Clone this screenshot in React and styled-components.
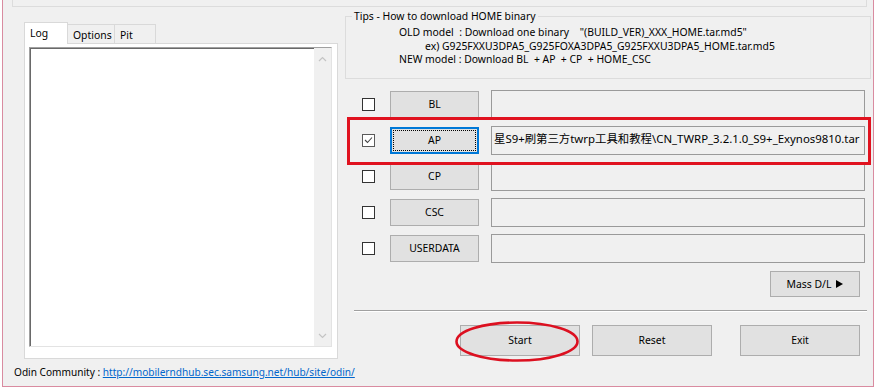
import styled, { createGlobalStyle } from 'styled-components';

const GlobalStyle = createGlobalStyle`
  html, body {
    margin: 0;
    padding: 0;
    background: #ffffff;
  }
  body {
    font-family: "Noto Sans", "Noto Sans CJK SC", sans-serif;
    font-size: 10.4px;
    color: #000;
  }
`;

const Frame = styled.div`
  position: relative;
  box-sizing: border-box;
  width: 872px;
  height: 387px;
  margin-left: 2px;
  background: #f0f0f0;
  border: 1px solid #d98ba0;
  border-top: none;
  display: flex;
  flex-direction: column;
`;

const TopGroup = styled.div`
  box-sizing: border-box;
  width: 855px;
  height: 7px;
  margin-left: 9px;
  border: 1px solid #dcdcdc;
  border-top: none;
`;

const Main = styled.div`
  display: flex;
  align-items: flex-start;
`;

const LeftCol = styled.div`
  width: 314px;
  margin: 15px 0 0 21px;
`;

const Tabs = styled.div`
  display: flex;
  align-items: flex-end;
  height: 21px;
  position: relative;
  z-index: 1;
`;

const Tab = styled.div`
  box-sizing: border-box;
  width: ${(p) => p.$w}px;
  height: ${(p) => (p.$active ? 22 : 19)}px;
  margin-bottom: ${(p) => (p.$active ? -1 : 0)}px;
  margin-left: ${(p) => (p.$first ? 0 : -1)}px;
  padding: ${(p) => (p.$active ? '3px 0 0 5px' : '3px 0 0 5px')};
  background: ${(p) => (p.$active ? '#ffffff' : '#f0f0f0')};
  border: 1px solid #d9d9d9;
  border-bottom: none;
  line-height: 14px;
`;

const TabPanel = styled.div`
  box-sizing: border-box;
  width: 314px;
  height: 316px;
  padding: 3px 0 0 4px;
  background: #ffffff;
  border: 1px solid #d9d9d9;
`;

const LogBox = styled.div`
  box-sizing: border-box;
  width: 303px;
  height: 300px;
  display: flex;
  justify-content: flex-end;
  background: #ffffff;
  border-top: 1px solid #a0a0a0;
  border-left: 1px solid #a0a0a0;
  border-right: 1px solid #e3e3e3;
  border-bottom: 1px solid #e3e3e3;
  box-shadow: inset 1px 1px 0 #696969;
`;

const ScrollTrack = styled.div`
  width: 17px;
  background: #f0f0f0;
  display: flex;
  flex-direction: column;
  justify-content: space-between;
  align-items: center;
  padding: 8px 0 7px;
`;

const RightCol = styled.div`
  width: 526px;
  margin: 2px 0 0 7px;
`;

const Tips = styled.fieldset`
  margin: 0;
  padding: 0;
  border: 1px solid #dcdcdc;
  min-width: 0;
`;

const TipsTitle = styled.legend`
  margin-left: 6px;
  padding: 0 2px;
  line-height: 14px;
`;

const TipsBody = styled.div`
  padding: 3px 0 11px 53px;
  line-height: 13.5px;
`;

const TipLine = styled.div`
  padding-left: ${(p) => (p.$indent ? 26 : 0)}px;
  white-space: pre;
`;

const Rows = styled.div`
  display: flex;
  flex-direction: column;
  gap: 7px;
  margin-top: 11px;
`;

const Row = styled.div`
  display: flex;
  align-items: center;
  height: 29px;
  padding-left: 17px;
`;

const Check = styled.div`
  box-sizing: border-box;
  width: 13px;
  height: 13px;
  margin-right: 15px;
  background: #ffffff;
  border: 1px solid ${(p) => (p.$checked ? '#5a5a5a' : '#333333')};
  display: flex;
  align-items: center;
  justify-content: center;
`;

const Button = styled.button`
  box-sizing: border-box;
  width: ${(p) => p.$w}px;
  height: ${(p) => p.$h}px;
  margin-left: ${(p) => p.$gap || 0}px;
  padding: 0;
  background: #e1e1e1;
  border: 1px solid ${(p) => (p.$focused ? '#0078d7' : '#adadad')};
  box-shadow: ${(p) => (p.$focused ? 'inset 0 0 0 1px #0078d7' : 'none')};
  outline: ${(p) => (p.$focused ? '1px dotted #000' : 'none')};
  outline-offset: -4px;
  font: inherit;
  color: #000;
  display: flex;
  align-items: center;
  justify-content: center;
  gap: 5px;
`;

const Field = styled.div`
  box-sizing: border-box;
  width: 374px;
  height: 29px;
  margin-left: 12px;
  padding: 0 0 0 2px;
  background: #f0f0f0;
  border: 1px solid #9a9a9a;
  overflow: hidden;
  white-space: nowrap;
  font-size: 11.4px;
  line-height: 24px;
`;

const MassRow = styled.div`
  display: flex;
  justify-content: flex-end;
  padding-right: 11px;
  margin-top: 8px;
`;

const Separator = styled.div`
  margin: 13px 4px 0 9px;
  border-top: 1px solid #a0a0a0;
  border-bottom: 1px solid #ffffff;
`;

const Actions = styled.div`
  display: flex;
  justify-content: flex-end;
  padding-right: 11px;
  margin-top: 13px;
`;

const Footer = styled.div`
  margin-top: 5px;
  padding-left: 11px;
  font-size: 10.1px;
  line-height: 16px;
`;

const Link = styled.a`
  color: #0066cc;
  text-decoration: underline;
`;

const RedBox = styled.div`
  position: absolute;
  left: 344px;
  top: 117px;
  width: 524px;
  height: 48px;
  box-sizing: border-box;
  border: 3px solid #e0121f;
  pointer-events: none;
`;

const RedEllipse = styled.svg`
  position: absolute;
  left: 452px;
  top: 321px;
  pointer-events: none;
`;

const Chevron = ({ down }) => (
  <svg width="9" height="6" viewBox="0 0 9 6">
    <polyline
      points={down ? '1,1 4.5,4.5 8,1' : '1,5 4.5,1.5 8,5'}
      fill="none"
      stroke="#c4c4c4"
      strokeWidth="1.2"
    />
  </svg>
);

const files = [
  { name: 'BL' },
  { name: 'AP', checked: true, path: '星S9+刷第三方twrp工具和教程\\CN_TWRP_3.2.1.0_S9+_Exynos9810.tar' },
  { name: 'CP' },
  { name: 'CSC' },
  { name: 'USERDATA' },
];

export default function App() {
  return (
    <>
      <GlobalStyle />
      <Frame>
        <TopGroup />
        <Main>
          <LeftCol>
            <Tabs>
              <Tab $w={44} $active $first>Log</Tab>
              <Tab $w={48}>Options</Tab>
              <Tab $w={42}>Pit</Tab>
            </Tabs>
            <TabPanel>
              <LogBox>
                <ScrollTrack>
                  <Chevron />
                  <Chevron down />
                </ScrollTrack>
              </LogBox>
            </TabPanel>
          </LeftCol>

          <RightCol>
            <Tips>
              <TipsTitle>Tips - How to download HOME binary</TipsTitle>
              <TipsBody>
                <TipLine>{'OLD model  : Download one binary    "(BUILD_VER)_XXX_HOME.tar.md5"'}</TipLine>
                <TipLine $indent>ex) G925FXXU3DPA5_G925FOXA3DPA5_G925FXXU3DPA5_HOME.tar.md5</TipLine>
                <TipLine>{'NEW model : Download BL  + AP  + CP  + HOME_CSC'}</TipLine>
              </TipsBody>
            </Tips>

            <Rows>
              {files.map((f) => (
                <Row key={f.name}>
                  <Check $checked={f.checked}>
                    {f.checked && (
                      <svg width="9" height="8" viewBox="0 0 9 8">
                        <polyline points="1,4 3.5,6.5 8,1.5" fill="none" stroke="#444" strokeWidth="1.1" />
                      </svg>
                    )}
                  </Check>
                  <Button $w={89} $h={27} $focused={f.checked}>{f.name}</Button>
                  <Field>{f.path}</Field>
                </Row>
              ))}
            </Rows>

            <MassRow>
              <Button $w={90} $h={26}>
                Mass D/L
                <svg width="7" height="8" viewBox="0 0 7 8">
                  <polygon points="0,0 7,4 0,8" fill="#000" />
                </svg>
              </Button>
            </MassRow>

            <Separator />

            <Actions>
              <Button $w={120} $h={31}>Start</Button>
              <Button $w={120} $h={31} $gap={12}>Reset</Button>
              <Button $w={120} $h={31} $gap={28}>Exit</Button>
            </Actions>
          </RightCol>
        </Main>

        <Footer>
          Odin Community : <Link href="#">http://mobilerndhub.sec.samsung.net/hub/site/odin/</Link>
        </Footer>

        <RedBox />
        <RedEllipse width="124" height="41" viewBox="0 0 124 41">
          <ellipse cx="62" cy="20.5" rx="60.5" ry="19" fill="none" stroke="#dc1020" strokeWidth="2.6" />
        </RedEllipse>
      </Frame>
    </>
  );
}
